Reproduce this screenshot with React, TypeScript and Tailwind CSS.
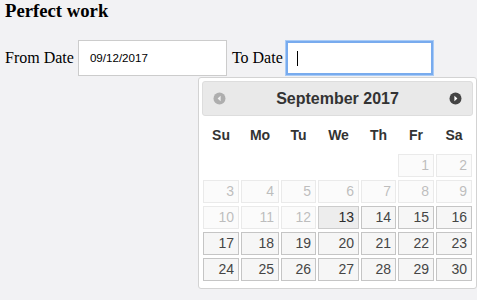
import React from "react";

const cols = "grid-cols-[36px_38px_35px_41px_35px_36px_36px]";

function CircleIcon({ dir, dim }: { dir: "w" | "e"; dim?: boolean }) {
  return (
    <svg width="13" height="13" viewBox="0 0 13 13" className={dim ? "opacity-35" : ""}>
      <circle cx="6.5" cy="6.5" r="6" fill="#444444" />
      {dir === "w" ? (
        <polygon points="7.6,3.8 4.6,6.5 7.6,9.2" fill="#ffffff" />
      ) : (
        <polygon points="5.4,3.8 8.4,6.5 5.4,9.2" fill="#ffffff" />
      )}
    </svg>
  );
}

type Cell = { n: number | null; state?: "dis" | "hover" | "norm" };

export default function App() {
  const days = ["Su", "Mo", "Tu", "We", "Th", "Fr", "Sa"];
  const cells: Cell[] = [];
  for (let i = 0; i < 5; i++) cells.push({ n: null });
  for (let d = 1; d <= 30; d++) {
    let state: Cell["state"] = "norm";
    if (d < 13) state = "dis";
    else if (d === 13) state = "hover";
    cells.push({ n: d, state });
  }

  return (
    <div className="relative w-[477px] h-[300px] bg-[#f2f2f4] overflow-hidden font-['Liberation_Serif',serif] text-black">
      <h3 className="m-0 pl-[5px] text-[18.72px] leading-[21.5px] font-bold">Perfect work</h3>
      <div className="mt-[18.5px] flex items-center h-[36px] pl-[5px] text-[16px]">
        <span>From Date</span>
        <div className="ml-[4px] w-[149px] h-[36px] bg-white border border-[#cccccc] flex items-center pl-[11px] font-['Liberation_Sans',Arial,sans-serif] text-[11.6px]">
          09/12/2017
        </div>
        <span className="ml-[5px]">To Date</span>
        <div className="ml-[2px] w-[149px] h-[36px] bg-white border border-[#a9cbf6] shadow-[inset_0_0_0_2px_#78abee] flex items-center pl-[11px]">
          <div className="w-px h-[15px] bg-black" />
        </div>
      </div>

      <div className="absolute left-[198px] top-[77px] w-[279px] h-[212px] bg-white border border-[#d3d3d3] rounded-[3px] p-[3px] font-['Liberation_Sans',Arial,sans-serif]">
        <div className="relative h-[35px] bg-[#e9e9e9] border border-[#dddddd] rounded-[3px] flex items-center justify-center">
          <span className="text-[16px] font-bold text-[#333333]">September 2017</span>
          <div className="absolute left-[10px] top-[10px]">
            <CircleIcon dir="w" dim />
          </div>
          <div className="absolute right-[10px] top-[10px]">
            <CircleIcon dir="e" />
          </div>
        </div>
        <div className={`px-[1px] grid ${cols} gap-x-[2px] h-[38px] items-center`}>
          {days.map((d) => (
            <div key={d} className="text-center text-[14px] font-bold text-[#333333]">
              {d}
            </div>
          ))}
        </div>
        <div className={`px-[1px] grid ${cols} gap-x-[2px] gap-y-[3px] auto-rows-[23px]`}>
          {cells.map((c, i) =>
            c.n === null ? (
              <div key={i} />
            ) : (
              <div
                key={i}
                className={
                  "flex items-center justify-end pr-[4px] text-[14px] border " +
                  (c.state === "dis"
                    ? "border-[#c5c5c5] bg-[#f6f6f6] text-[#454545] opacity-35"
                    : c.state === "hover"
                    ? "border-[#cccccc] bg-[#ededed] text-[#2b2b2b]"
                    : "border-[#c5c5c5] bg-[#f6f6f6] text-[#454545]")
                }
              >
                {c.n}
              </div>
            )
          )}
        </div>
      </div>
    </div>
  );
}
